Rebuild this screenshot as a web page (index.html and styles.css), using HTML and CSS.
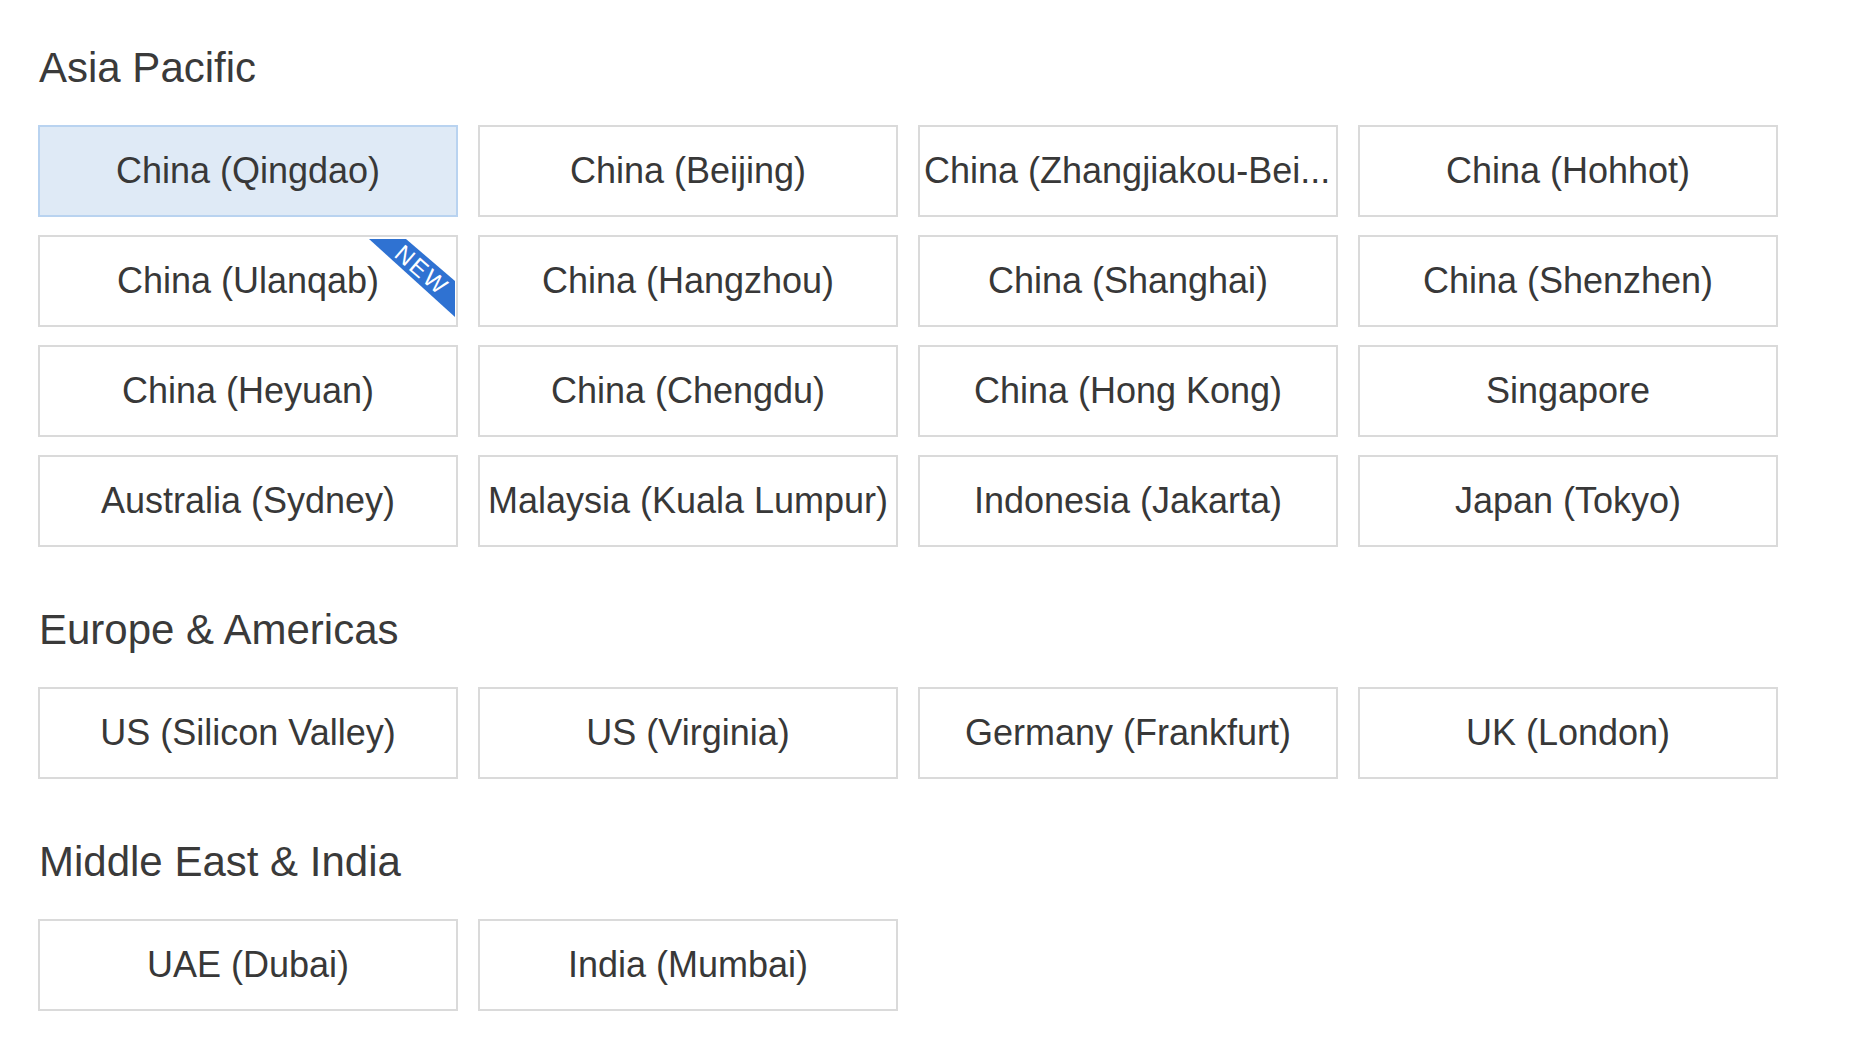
FILE: index.html
```html
<!DOCTYPE html>
<html lang="en">
<head>
<meta charset="utf-8">
<title>Regions</title>
<link rel="stylesheet" href="styles.css">
</head>
<body>
<div class="page">
  <section class="group">
    <h2 class="group-title">Asia Pacific</h2>
    <div class="grid">
      <div class="region selected">China (Qingdao)</div>
      <div class="region">China (Beijing)</div>
      <div class="region truncated" title="China (Zhangjiakou-Beijing Winter Olympics)">China (Zhangjiakou-Bei...</div>
      <div class="region">China (Hohhot)</div>
      <div class="region">China (Ulanqab)<svg class="ribbon" width="88" height="82" viewBox="0 0 88 82"><polygon points="1,2 38,2 87,44 87,80" fill="#2f72d2"/><text x="0" y="0" transform="translate(54,33) rotate(41)" text-anchor="middle" dominant-baseline="central" class="ribbon-text">NEW</text></svg></div>
      <div class="region">China (Hangzhou)</div>
      <div class="region">China (Shanghai)</div>
      <div class="region">China (Shenzhen)</div>
      <div class="region">China (Heyuan)</div>
      <div class="region">China (Chengdu)</div>
      <div class="region">China (Hong Kong)</div>
      <div class="region">Singapore</div>
      <div class="region">Australia (Sydney)</div>
      <div class="region">Malaysia (Kuala Lumpur)</div>
      <div class="region">Indonesia (Jakarta)</div>
      <div class="region">Japan (Tokyo)</div>
    </div>
  </section>
  <section class="group">
    <h2 class="group-title">Europe &amp; Americas</h2>
    <div class="grid">
      <div class="region">US (Silicon Valley)</div>
      <div class="region">US (Virginia)</div>
      <div class="region">Germany (Frankfurt)</div>
      <div class="region">UK (London)</div>
    </div>
  </section>
  <section class="group">
    <h2 class="group-title">Middle East &amp; India</h2>
    <div class="grid">
      <div class="region">UAE (Dubai)</div>
      <div class="region">India (Mumbai)</div>
    </div>
  </section>
</div>
</body>
</html>
```
FILE: styles.css
```css
html, body {
  margin: 0;
  padding: 0;
  background: #ffffff;
}
body {
  font-family: "Liberation Sans", Arial, sans-serif;
  color: #333333;
}
.page {
  padding: 44px 0 0 39px;
  display: flex;
  flex-direction: column;
  gap: 59px;
}
.group {
  display: flex;
  flex-direction: column;
  gap: 33px;
}
.group-title {
  margin: 0;
  font-size: 42px;
  line-height: 48px;
  font-weight: normal;
  color: #3a3a3a;
}
.grid {
  display: grid;
  grid-template-columns: repeat(4, 420px);
  grid-auto-rows: 92px;
  column-gap: 20px;
  row-gap: 18px;
  margin-left: -1px;
}
.region {
  position: relative;
  box-sizing: border-box;
  height: 92px;
  border: 2px solid #dadada;
  background: #ffffff;
  padding: 0 2px;
  font-size: 36px;
  line-height: 88px;
  text-align: center;
  color: #383838;
  white-space: nowrap;
  overflow: hidden;
}
.region.truncated {
  text-align: left;
  padding-left: 4px;
}
.region.selected {
  background: #dfeaf6;
  border-color: #b9d3f0;
}
.ribbon {
  position: absolute;
  top: 0;
  right: 0;
}
.ribbon-text {
  fill: #ffffff;
  font-family: "Liberation Sans", Arial, sans-serif;
  font-size: 24px;
  letter-spacing: 2px;
}
```
